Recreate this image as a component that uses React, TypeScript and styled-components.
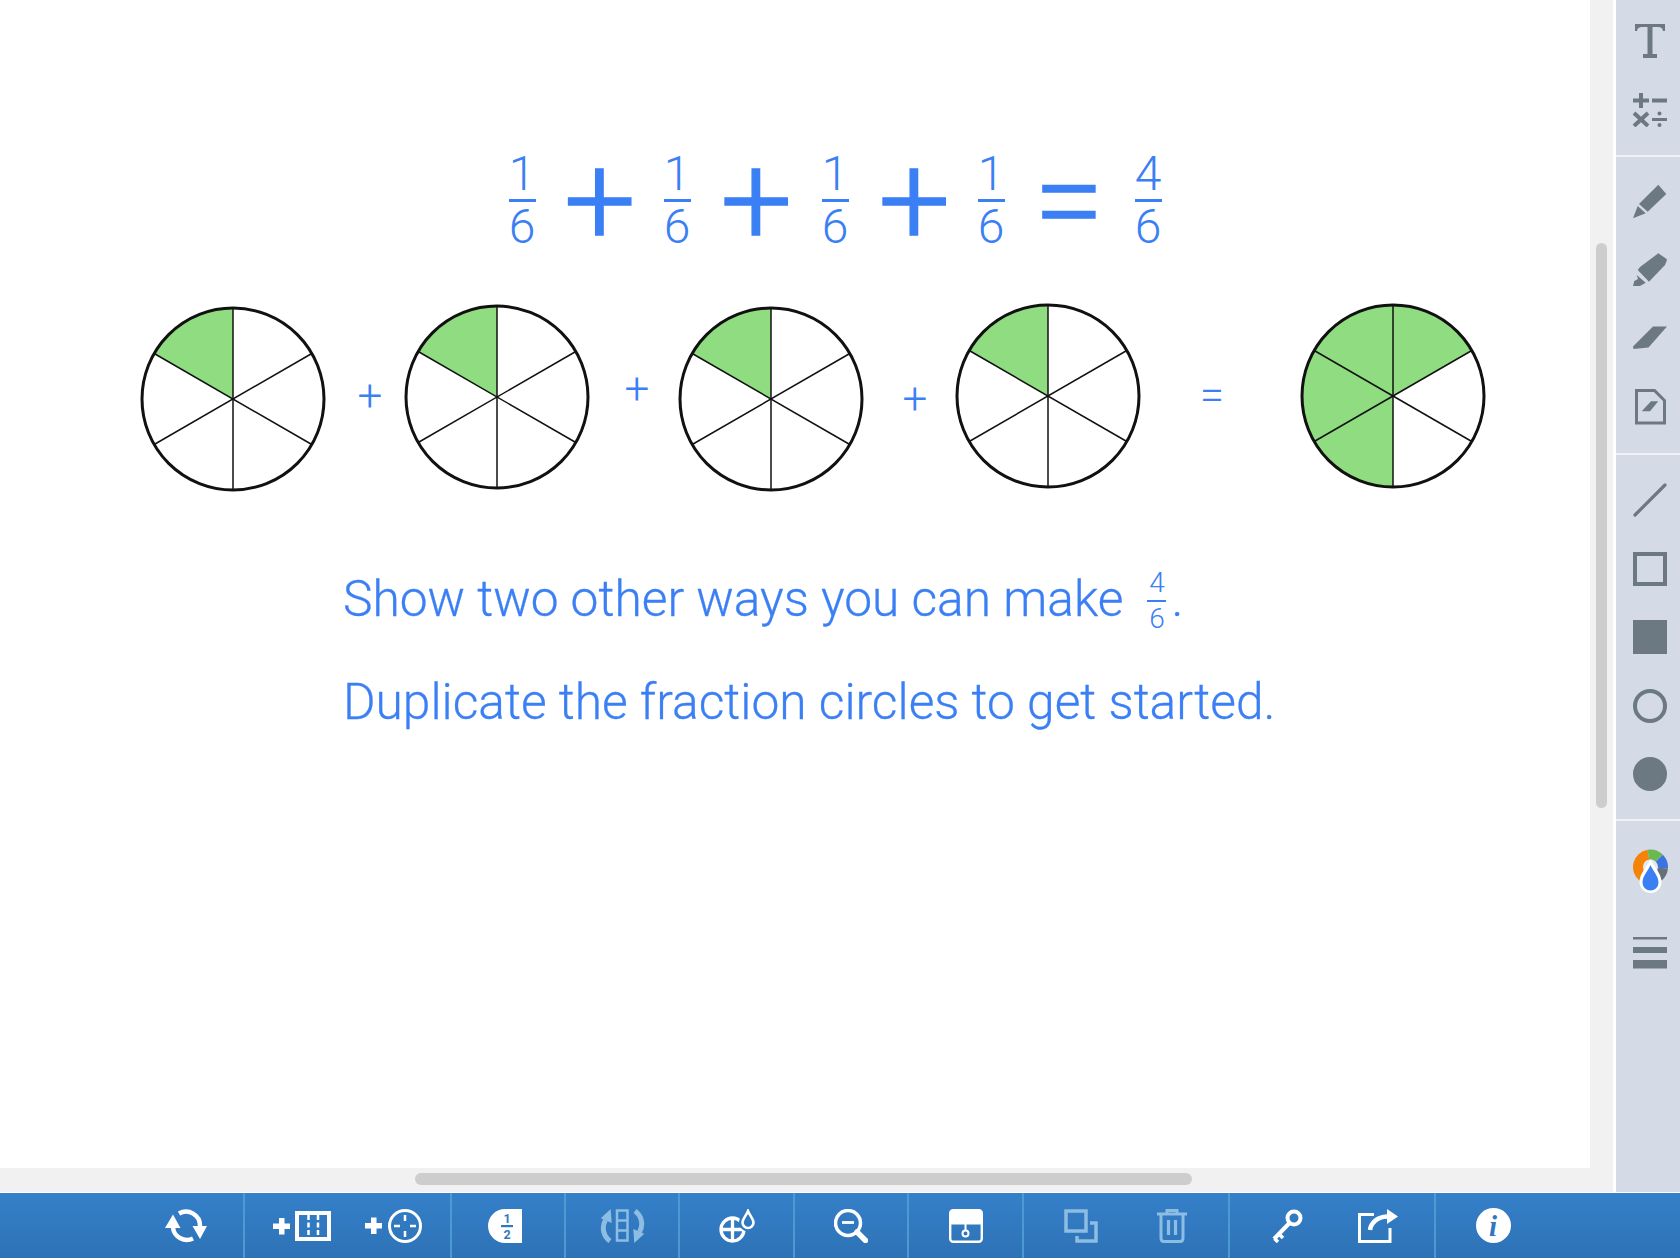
import React from "react";
import styled, { createGlobalStyle } from "styled-components";

const BLUE = "#3b7ff5";
const GRAY = "#6c7983";
const DIM = "#8dbde3";

const GlobalStyle = createGlobalStyle`
  html, body {
    margin: 0;
    padding: 0;
    background: #ffffff;
    overflow: hidden;
  }
`;

const Screen = styled.div`
  width: 1680px;
  height: 1258px;
  display: flex;
  flex-direction: column;
  font-family: Roboto, "Liberation Sans", sans-serif;
  overflow: hidden;
`;

const Workspace = styled.div`
  flex: 1;
  min-height: 0;
  display: flex;
`;

const CanvasColumn = styled.div`
  width: 1613px;
  display: flex;
  flex-direction: column;
`;

const CanvasRow = styled.div`
  flex: 1;
  min-height: 0;
  display: flex;
`;

const Canvas = styled.div`
  position: relative;
  width: 1590px;
  background: #ffffff;
`;

const VerticalTrack = styled.div`
  width: 23px;
  background: #f1f1f1;
  padding: 243px 0 0 6px;
  box-sizing: border-box;
`;

const VerticalThumb = styled.div`
  width: 11px;
  height: 565px;
  border-radius: 6px;
  background: #cdcdcd;
`;

const HorizontalTrack = styled.div`
  height: 24px;
  background: #f1f1f1;
  padding: 5px 0 0 415px;
  box-sizing: border-box;
`;

const HorizontalThumb = styled.div`
  width: 777px;
  height: 12px;
  border-radius: 6px;
  background: #cdcdcd;
`;

const Sidebar = styled.div`
  width: 64px;
  margin-left: 3px;
  background: #d4dbe6;
`;

const SideGroup = styled.div<{ $top?: number; $bottom?: number }>`
  padding: ${(p) => p.$top ?? 11}px 0 ${(p) => p.$bottom ?? 10}px 17px;
  & + & {
    border-top: 2px solid #eef1f5;
  }
`;

const SideButton = styled.div<{ $height?: number }>`
  width: 34px;
  height: ${(p) => p.$height ?? 68.5}px;
  display: flex;
  align-items: center;
  justify-content: center;
`;

const BottomBar = styled.div`
  height: 65px;
  margin-top: 1px;
  display: flex;
  background: linear-gradient(#3480c9, #2e72b6);
`;

const ToolGroup = styled.div<{ $pad?: number; $width?: number }>`
  display: flex;
  flex: none;
  justify-content: flex-end;
  box-sizing: border-box;
  width: ${(p) => (p.$width ? `${p.$width}px` : "auto")};
  padding: 0 ${(p) => p.$pad ?? 0}px;
  border-right: 2px solid #4b9ad2;
  &:last-child {
    border-right: 0;
  }
`;

const ToolButton = styled.div<{ $width?: number }>`
  width: ${(p) => p.$width ?? 92}px;
  height: 100%;
  display: flex;
  align-items: center;
  justify-content: center;
`;

const Fraction = styled.div<{ $x?: number; $y?: number; $size: number; $gap: number; $bar: number }>`
  position: ${(p) => (p.$x === undefined ? "static" : "absolute")};
  left: ${(p) => p.$x}px;
  top: ${(p) => p.$y}px;
  width: ${(p) => p.$bar}px;
  display: ${(p) => (p.$x === undefined ? "inline-flex" : "flex")};
  flex-direction: column;
  align-items: center;
  gap: ${(p) => p.$gap}px;
  color: ${BLUE};
  font-size: ${(p) => p.$size}px;
  font-weight: 300;
  line-height: 1;
`;

const FractionBar = styled.div<{ $thick: number }>`
  align-self: stretch;
  height: ${(p) => p.$thick}px;
  background: ${BLUE};
`;

const BigSign = styled.div<{ $x: number }>`
  position: absolute;
  left: ${(p) => p.$x}px;
  top: 136px;
  width: 100px;
  text-align: center;
  color: ${BLUE};
  font-size: 128px;
  font-weight: 300;
  line-height: 1;
  -webkit-text-stroke: 1.300px ${BLUE};
`;

const SmallSign = styled.div<{ $x: number; $y: number }>`
  position: absolute;
  left: ${(p) => p.$x}px;
  top: ${(p) => p.$y}px;
  width: 60px;
  text-align: center;
  color: ${BLUE};
  font-size: 44px;
  font-weight: 300;
  line-height: 1;
`;

const PieSvg = styled.svg<{ $x: number; $y: number }>`
  position: absolute;
  left: ${(p) => p.$x - 94}px;
  top: ${(p) => p.$y - 94}px;
  width: 188px;
  height: 188px;
`;

const Sentence = styled.div<{ $y: number }>`
  position: absolute;
  left: 343px;
  top: ${(p) => p.$y}px;
  display: flex;
  align-items: flex-start;
  color: ${BLUE};
  font-size: 49.7px;
  font-weight: 300;
  line-height: 56px;
  white-space: nowrap;
  -webkit-text-stroke: 0.300px ${BLUE};
`;

const InlineFraction = styled.span`
  display: inline-flex;
  margin: -2px 5px 0 24px;
  -webkit-text-stroke: 0;
`;

const Icon = styled.svg`
  display: block;
  flex: none;
`;

// one slice of a pie, degrees clockwise from twelve o'clock
const slice = (from: number, to: number) => {
  const pt = (a: number) => {
    const r = (a * Math.PI) / 180;
    return `${(94 + 91 * Math.sin(r)).toFixed(2)} ${(94 - 91 * Math.cos(r)).toFixed(2)}`;
  };
  return `M94 94 L${pt(from)} A91 91 0 ${to - from > 180 ? 1 : 0} 1 ${pt(to)} Z`;
};

const Pie = ({ x, y, from, to }: { x: number; y: number; from: number; to: number }) => (
  <PieSvg $x={x} $y={y} viewBox="0 0 188 188">
    <circle cx="94" cy="94" r="91" fill="#ffffff" />
    <path d={slice(from, to)} fill="#8fdd80" />
    {[0, 60, 120].map((a) => {
      const r = (a * Math.PI) / 180;
      const dx = 91 * Math.sin(r);
      const dy = 91 * Math.cos(r);
      return (
        <line key={a} x1={94 - dx} y1={94 + dy} x2={94 + dx} y2={94 - dy} stroke="#111" strokeWidth="1.5" />
      );
    })}
    <circle cx="94" cy="94" r="91" fill="none" stroke="#111" strokeWidth="3" />
  </PieSvg>
);

const BigFraction = ({ x, n }: { x: number; n: number }) => (
  <Fraction $x={x - 13.5} $y={150} $size={48} $gap={1} $bar={27}>
    <span>{n}</span>
    <FractionBar $thick={3} />
    <span>6</span>
  </Fraction>
);

/* sidebar icons */
const TextIcon = () => (
  <Icon width="34" height="34" viewBox="0 0 34 34" fill={GRAY}>
    <path d="M2 0H32V7H30C29.500 4 28 3 25 3H19.500V30H24V34H10V30H14.500V3H9C6 3 4.500 4 4 7H2Z" />
  </Icon>
);

const MathIcon = () => (
  <Icon width="36" height="34" viewBox="0 0 36 34" stroke={GRAY} fill="none" strokeWidth="4">
    <path d="M9 0V15M1 7.500H17" />
    <path d="M20 7.500H35" />
    <path d="M2 20L16 33M16 20L2 33" />
    <path d="M20 26.500H35" strokeWidth="3" />
    <circle cx="27.500" cy="20.500" r="2" fill={GRAY} stroke="none" />
    <circle cx="27.500" cy="32" r="2" fill={GRAY} stroke="none" />
  </Icon>
);

const PencilIcon = () => (
  <Icon width="34" height="35" viewBox="0 0 34 35" fill={GRAY}>
    <path d="M25.300 0.700L33.300 10L14.700 27.700L6 20Z" />
    <path d="M4.700 22L12.700 29.300L0 34.300Z" />
  </Icon>
);

const HighlighterIcon = () => (
  <Icon width="34" height="35" viewBox="0 0 34 35" fill={GRAY}>
    <path d="M25.300 1.300L33 6.500L34 8L32 13L16 29.700L4.700 18L7 15Z" />
    <path d="M3.700 23L12.700 30.700L7 34H0L1.300 29L5 27Z" />
  </Icon>
);

const EraserIcon = () => (
  <Icon width="34" height="24" viewBox="0 0 34 24" fill={GRAY}>
    <path d="M20 0.500H34L15.500 21.500L0.500 23L0 20.500Z" />
  </Icon>
);

const NoteIcon = () => (
  <Icon width="31" height="36" viewBox="0 0 31 36" fill="none">
    <path d="M1.500 1.500H19.500L29.500 11.500V34H1.500Z" stroke={GRAY} strokeWidth="3" />
    <path d="M16 12.300H23.300L15 22.300H6.700Z" fill={GRAY} />
  </Icon>
);

const LineIcon = () => (
  <Icon width="34" height="34" viewBox="0 0 34 34" stroke={GRAY} strokeWidth="3.200" strokeLinecap="round">
    <path d="M2 32L32 2" />
  </Icon>
);

const SquareIcon = ({ solid }: { solid?: boolean }) => (
  <Icon width="34" height="34" viewBox="0 0 34 34">
    <rect x="2" y="2" width="30" height="30" fill={solid ? GRAY : "none"} stroke={GRAY} strokeWidth="4" />
  </Icon>
);

const RoundIcon = ({ solid }: { solid?: boolean }) => (
  <Icon width="34" height="34" viewBox="0 0 34 34">
    <circle cx="17" cy="17" r="15" fill={solid ? GRAY : "none"} stroke={GRAY} strokeWidth="4" />
  </Icon>
);

// arc of the colour wheel, clockwise from twelve o'clock, centre 17,18
const ringArc = (from: number, to: number) => {
  const pt = (a: number) => {
    const r = (a * Math.PI) / 180;
    return `${(17.500 + 12.500 * Math.sin(r)).toFixed(2)} ${(18 - 12.500 * Math.cos(r)).toFixed(2)}`;
  };
  return `M${pt(from)} A12.500 12.500 0 0 1 ${pt(to)}`;
};

const ColourIcon = () => (
  <Icon width="35" height="46" viewBox="0 0 35 46" fill="none">
    <circle cx="17.500" cy="18" r="8" fill="#e4e7ec" />
    <path d={ringArc(218, 350)} stroke="#f58307" strokeWidth="10" />
    <path d={ringArc(350, 45)} stroke="#6cb852" strokeWidth="10" />
    <path d={ringArc(45, 95)} stroke="#3b73e0" strokeWidth="10" />
    <path d={ringArc(95, 140)} stroke="#66707a" strokeWidth="10" />
    <path d="M17.500 10C21 18 28.500 24 28.500 33A11 11 0 0 1 6.500 33C6.500 24 14 18 17.500 10Z" fill="#ffffff" />
    <path d="M17.500 16C20 22 25.500 27 25.500 33.500A8 8 0 0 1 9.500 33.500C9.500 27 15 22 17.500 16Z" fill="#3b7ff5" />
  </Icon>
);

const MenuIcon = () => (
  <Icon width="34" height="32" viewBox="0 0 34 32" fill={GRAY}>
    <rect x="0" y="0" width="34" height="2.500" />
    <rect x="0" y="10" width="34" height="6" />
    <rect x="0" y="23" width="34" height="8.500" />
  </Icon>
);

/* bottom toolbar icons */
const SyncIcon = () => (
  <Icon width="42" height="34" viewBox="0 0 42 34" fill="#fff">
    <path d="M14 4.500A14 14 0 0 1 35 17" fill="none" stroke="#fff" strokeWidth="4.500" />
    <path d="M8 19A14 14 0 0 0 28 29.500" fill="none" stroke="#fff" strokeWidth="4.500" />
    <path d="M8 5.500L0 19H15.500Z" />
    <path d="M35 30L27.500 17H42Z" />
  </Icon>
);

const PlusMark = () => <path d="M6 8.500H11.500V14H17V19.500H11.500V25H6V19.500H0V14H6Z" fill="#fff" stroke="none" />;

const AddTableIcon = () => (
  <Icon width="58" height="30" viewBox="0 0 58 30" fill="none" stroke="#fff">
    <g transform="translate(0 -1.500)">
      <PlusMark />
    </g>
    <rect x="24" y="2" width="32" height="26" strokeWidth="4" />
    <path d="M35.500 4V26M45 4V26" strokeWidth="2.500" strokeDasharray="5 2.500" />
  </Icon>
);

const AddCircleIcon = () => (
  <Icon width="57" height="34" viewBox="0 0 57 34" fill="none" stroke="#fff">
    <PlusMark />
    <circle cx="40" cy="17" r="15.500" strokeWidth="3" />
    <path d="M40 6V12M40 22V28M29 17H35M45 17H51" strokeWidth="2.500" />
  </Icon>
);

const HalfIcon = () => (
  <Icon width="40" height="34" viewBox="0 0 40 34">
    <path d="M34 0H17A17 17 0 0 0 17 34H34Z" fill="#fff" />
    <text x="19" y="14" textAnchor="middle" fontFamily="Roboto, sans-serif" fontWeight="700" fontSize="12.500" fill="#2f78bf">1</text>
    <rect x="13" y="16" width="12" height="2.200" fill="#2f78bf" />
    <text x="19" y="30" textAnchor="middle" fontFamily="Roboto, sans-serif" fontWeight="700" fontSize="12.500" fill="#2f78bf">2</text>
  </Icon>
);

const RotateIcon = () => (
  <Icon width="45" height="34" viewBox="0 0 45 34" fill="none" stroke={DIM}>
    <rect x="17" y="1.500" width="10.500" height="30" strokeWidth="2.500" />
    <path d="M17 11.500H27.500M17 21.500H27.500" strokeWidth="2.500" />
    <path d="M5.500 11C1.500 18 3 27 10 32" strokeWidth="5" />
    <path d="M39.500 23C43.500 16 42 7 35 2" strokeWidth="5" />
    <path d="M10.700 0L0.700 9.300L11.700 14Z" fill={DIM} stroke="none" />
    <path d="M34.300 34L44.300 24.700L33.300 20Z" fill={DIM} stroke="none" />
  </Icon>
);

const PieDropIcon = () => (
  <Icon width="36" height="34" viewBox="0 0 36 34" fill="none" stroke="#fff" strokeWidth="3.300">
    <circle cx="13.500" cy="20.500" r="11.500" />
    <path d="M13.500 9V32M2 20.500H25" />
    <path d="M29 2C31 7 34.500 10 34.500 13.500A5.500 5.500 0 0 1 23.500 13.500C23.500 10 27 7 29 2Z" stroke="#3079c1" strokeWidth="7" fill="#3079c1" />
    <path d="M29 2C31 7 34.500 10 34.500 13.500A5.500 5.500 0 0 1 23.500 13.500C23.500 10 27 7 29 2Z" strokeWidth="2.600" fill="#3079c1" />
  </Icon>
);

const ZoomOutIcon = () => (
  <Icon width="34" height="34" viewBox="0 0 34 34" fill="none" stroke="#fff">
    <circle cx="14" cy="14" r="12.500" strokeWidth="3.500" />
    <path d="M8 13.500H20" strokeWidth="2.800" />
    <path d="M23 23L31.500 31.500" strokeWidth="5.500" strokeLinecap="round" />
  </Icon>
);

const PanelIcon = () => (
  <Icon width="34" height="34" viewBox="0 0 34 34" fill="none" stroke="#fff">
    <rect x="1.200" y="1.200" width="31.600" height="31.600" rx="3" strokeWidth="2.400" />
    <path d="M1 3.500C1 1.500 2 1 4 1H30C32 1 33 1.500 33 3.500V15.500H1Z" fill="#fff" stroke="none" />
    <circle cx="16.500" cy="24.500" r="3" strokeWidth="2" />
    <path d="M16.500 15V21" strokeWidth="2" />
  </Icon>
);

const CopyIcon = () => (
  <Icon width="34" height="34" viewBox="0 0 34 34" fill="none" stroke={DIM} strokeWidth="3.500">
    <rect x="2" y="2" width="20" height="20" />
    <path d="M13 27V32H32V14H26" />
  </Icon>
);

const TrashIcon = () => (
  <Icon width="30" height="34" viewBox="0 0 30 34" fill="none" stroke={DIM} strokeWidth="3">
    <path d="M0 5H30" />
    <path d="M10 4V1.500H20V4" />
    <path d="M4 6V29C4 31.500 5 32.500 7 32.500H23C25 32.500 26 31.500 26 29V6" />
    <path d="M11.500 11V26M18.500 11V26" strokeWidth="3.200" />
  </Icon>
);

const KeyIcon = () => (
  <Icon width="32" height="34" viewBox="0 0 32 34" fill="none" stroke="#fff">
    <circle cx="23" cy="9" r="6.500" strokeWidth="4" />
    <path d="M18.500 14L3 30" strokeWidth="4" />
    <path d="M8 25L12 29M3.500 29.500L7 33" strokeWidth="3.500" />
  </Icon>
);

const ShareIcon = () => (
  <Icon width="40" height="34" viewBox="0 0 40 34" fill="none" stroke="#fff">
    <path d="M16 5.500H1.500V32.500H32V19" strokeWidth="3" />
    <path d="M12 21C13 14 19 8 29 7.500" strokeWidth="4.500" />
    <path d="M29 0L40 7.500L29 15Z" fill="#fff" stroke="none" />
  </Icon>
);

const InfoIcon = () => (
  <Icon width="35" height="35" viewBox="0 0 35 35">
    <circle cx="17.500" cy="17.500" r="17.500" fill="#fff" />
    <text x="17" y="28" textAnchor="middle" fontFamily="'Liberation Serif', serif" fontStyle="italic" fontWeight="700" fontSize="29" fill="#2f78bf">i</text>
  </Icon>
);

const bigFractions = [
  { x: 522, n: 1 },
  { x: 677, n: 1 },
  { x: 835, n: 1 },
  { x: 991, n: 1 },
  { x: 1148, n: 4 },
];

const pies = [
  { x: 233, y: 398.500, from: 300, to: 360 },
  { x: 497, y: 397, from: 300, to: 360 },
  { x: 770.500, y: 398.500, from: 300, to: 360 },
  { x: 1048, y: 395.500, from: 300, to: 360 },
  { x: 1393, y: 395.500, from: 180, to: 420 },
];

export default function App() {
  return (
    <Screen>
      <GlobalStyle />
      <Workspace>
        <CanvasColumn>
          <CanvasRow>
            <Canvas>
              {bigFractions.map((f) => (
                <BigFraction key={f.x} x={f.x} n={f.n} />
              ))}
              <BigSign $x={550}>+</BigSign>
              <BigSign $x={706.5}>+</BigSign>
              <BigSign $x={864.5}>+</BigSign>
              <BigSign $x={1019}>=</BigSign>

              {pies.map((p) => (
                <Pie key={p.x} x={p.x} y={p.y} from={p.from} to={p.to} />
              ))}
              <SmallSign $x={340} $y={374}>+</SmallSign>
              <SmallSign $x={607} $y={367}>+</SmallSign>
              <SmallSign $x={885} $y={377}>+</SmallSign>
              <SmallSign $x={1182} $y={373}>=</SmallSign>

              <Sentence $y={571}>
                Show two other ways you can make
                <InlineFraction>
                  <Fraction $size={28} $gap={3} $bar={19}>
                    <span>4</span>
                    <FractionBar $thick={2} />
                    <span>6</span>
                  </Fraction>
                </InlineFraction>
                .
              </Sentence>
              <Sentence $y={674}>Duplicate the fraction circles to get started.</Sentence>
            </Canvas>
            <VerticalTrack>
              <VerticalThumb />
            </VerticalTrack>
          </CanvasRow>
          <HorizontalTrack>
            <HorizontalThumb />
          </HorizontalTrack>
        </CanvasColumn>

        <Sidebar>
          <SideGroup $top={7} $bottom={11}>
            <SideButton><TextIcon /></SideButton>
            <SideButton><MathIcon /></SideButton>
          </SideGroup>
          <SideGroup $top={10} $bottom={12}>
            <SideButton><PencilIcon /></SideButton>
            <SideButton><HighlighterIcon /></SideButton>
            <SideButton><EraserIcon /></SideButton>
            <SideButton><NoteIcon /></SideButton>
          </SideGroup>
          <SideGroup>
            <SideButton><LineIcon /></SideButton>
            <SideButton><SquareIcon /></SideButton>
            <SideButton><SquareIcon solid /></SideButton>
            <SideButton><RoundIcon /></SideButton>
            <SideButton><RoundIcon solid /></SideButton>
          </SideGroup>
          <SideGroup $top={17}>
            <SideButton><ColourIcon /></SideButton>
            <SideButton $height={94}><MenuIcon /></SideButton>
          </SideGroup>
        </Sidebar>
      </Workspace>

      <BottomBar>
        <ToolGroup $width={245}>
          <ToolButton $width={115}><SyncIcon /></ToolButton>
        </ToolGroup>
        <ToolGroup $width={207} $pad={11}>
          <ToolButton><AddTableIcon /></ToolButton>
          <ToolButton><AddCircleIcon /></ToolButton>
        </ToolGroup>
        <ToolGroup $width={114}>
          <ToolButton $width={112}><HalfIcon /></ToolButton>
        </ToolGroup>
        <ToolGroup $width={114}>
          <ToolButton $width={112}><RotateIcon /></ToolButton>
        </ToolGroup>
        <ToolGroup $width={115}>
          <ToolButton $width={113}><PieDropIcon /></ToolButton>
        </ToolGroup>
        <ToolGroup $width={114}>
          <ToolButton $width={112}><ZoomOutIcon /></ToolButton>
        </ToolGroup>
        <ToolGroup $width={115}>
          <ToolButton $width={113}><PanelIcon /></ToolButton>
        </ToolGroup>
        <ToolGroup $width={206} $pad={11}>
          <ToolButton><CopyIcon /></ToolButton>
          <ToolButton><TrashIcon /></ToolButton>
        </ToolGroup>
        <ToolGroup $width={206} $pad={11}>
          <ToolButton><KeyIcon /></ToolButton>
          <ToolButton><ShareIcon /></ToolButton>
        </ToolGroup>
        <ToolGroup $width={114}>
          <ToolButton $width={114}><InfoIcon /></ToolButton>
        </ToolGroup>
      </BottomBar>
    </Screen>
  );
}
